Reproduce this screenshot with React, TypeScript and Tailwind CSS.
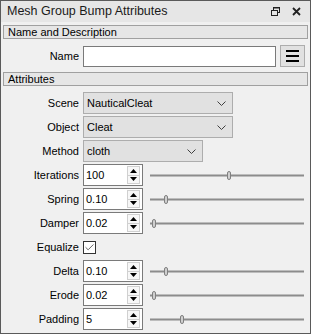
import { Check } from 'lucide-react';

const font = { fontFamily: '"Liberation Sans", Arial, sans-serif' };

function Label({ text }: { text: string }) {
  return <div className="w-[77px] shrink-0 text-right pr-[1px]">{text}</div>;
}

function Chevron() {
  return (
    <svg width="9" height="5" viewBox="0 0 9 5" className="shrink-0">
      <path d="M0.5 0.5 L4.5 4.5 L8.5 0.5" fill="none" stroke="#404040" strokeWidth="1" />
    </svg>
  );
}

function Combo({ value, width }: { value: string; width: string }) {
  return (
    <div className={`${width} h-[22px] bg-[#e1e1e1] border border-[#adadad] flex items-center justify-between pl-[3px] pr-[6px]`}>
      <span>{value}</span>
      <Chevron />
    </div>
  );
}

function Spin({ value }: { value: string }) {
  return (
    <div className="w-[60px] h-[22px] bg-white border border-[#7a7a7a] flex items-center justify-between pl-[2px] pr-[2px] shrink-0">
      <span>{value}</span>
      <div className="flex flex-col w-[13px] h-[18px]">
        <div className="flex-1 border border-[#d0d0d0] bg-[#f7f7f7] flex items-center justify-center">
          <svg width="7" height="4" viewBox="0 0 7 4"><path d="M0 4 L3.5 0 L7 4 Z" fill="#000" /></svg>
        </div>
        <div className="flex-1 border border-[#d0d0d0] border-t-0 bg-[#f7f7f7] flex items-center justify-center">
          <svg width="7" height="4" viewBox="0 0 7 4"><path d="M0 0 L3.5 4 L7 0 Z" fill="#000" /></svg>
        </div>
      </div>
    </div>
  );
}

function Slider({ pos }: { pos: number }) {
  return (
    <div className="relative flex-1 h-[22px] ml-[4px] flex items-center">
      <div className="w-full h-[3px] bg-[#8c8c8c] border-y border-[#bdbdbd]" />
      <div
        className="absolute top-[7px] w-[4px] h-[9px] rounded-full bg-[#cfcfcf] border border-[#808080]"
        style={{ left: pos }}
      />
    </div>
  );
}

function Row({ label, children }: { label: string; children: React.ReactNode }) {
  return (
    <div className="flex items-center h-[22px] gap-[3px]">
      <Label text={label} />
      {children}
    </div>
  );
}

function Header({ text }: { text: string }) {
  return (
    <div className="h-[14px] bg-[#e6e6e6] border border-[#a0a0a0] flex items-center pl-[4px] leading-none">
      {text}
    </div>
  );
}

export default function App() {
  const sliders = [
    { label: 'Iterations', value: '100', pos: 77 },
    { label: 'Spring', value: '0.10', pos: 14 },
    { label: 'Damper', value: '0.02', pos: 2 },
  ];
  const sliders2 = [
    { label: 'Delta', value: '0.10', pos: 14 },
    { label: 'Erode', value: '0.02', pos: 2 },
    { label: 'Padding', value: '5', pos: 30 },
  ];

  return (
    <div style={font} className="w-[311px] h-[334px] bg-[#f0f0f0] border border-[#5a5a5a] text-[11px] text-black flex flex-col">
      <div className="h-[21px] bg-[#e6e6e6] flex items-center justify-between pl-[6px] pr-[9px] shrink-0">
        <span className="text-[12.5px] text-[#1a1a1a]">Mesh Group Bump Attributes</span>
        <div className="flex items-center gap-[12px]">
          <svg width="9" height="9" viewBox="0 0 9 9">
            <rect x="2.5" y="0.5" width="6" height="5" fill="none" stroke="#222" />
            <rect x="0.5" y="3.5" width="6" height="5" fill="#e6e6e6" stroke="#222" />
            <line x1="2.5" y1="1" x2="8.5" y2="1" stroke="#222" />
          </svg>
          <svg width="9" height="9" viewBox="0 0 9 9">
            <path d="M1 1 L8 8 M8 1 L1 8" stroke="#222" strokeWidth="1.8" />
          </svg>
        </div>
      </div>

      <div className="flex flex-col px-[2px] pt-[3px]">
        <Header text="Name and Description" />
        <div className="flex items-center h-[22px] gap-[3px] mt-[6px]">
          <Label text="Name" />
          <div className="w-[193px] h-[21px] bg-white border border-[#7a7a7a]" />
          <div className="w-[25px] h-[22px] ml-[1px] bg-[#e1e1e1] border border-[#adadad] flex flex-col items-center justify-center gap-[3px]">
            <div className="w-[13px] h-[2px] bg-black" />
            <div className="w-[13px] h-[2px] bg-black" />
            <div className="w-[13px] h-[2px] bg-black" />
          </div>
        </div>

        <div className="mt-[5px]">
          <Header text="Attributes" />
        </div>

        <div className="flex flex-col gap-[2px] mt-[6px] pr-[4px]">
          <Row label="Scene">
            <Combo value="NauticalCleat" width="w-[150px]" />
          </Row>
          <Row label="Object">
            <Combo value="Cleat" width="w-[150px]" />
          </Row>
          <Row label="Method">
            <Combo value="cloth" width="w-[120px]" />
          </Row>
          {sliders.map((s) => (
            <Row key={s.label} label={s.label}>
              <Spin value={s.value} />
              <Slider pos={s.pos} />
            </Row>
          ))}
          <Row label="Equalize">
            <div className="w-[13px] h-[13px] bg-white border border-[#333] flex items-center justify-center">
              <Check size={11} strokeWidth={1.5} color="#222" />
            </div>
          </Row>
          {sliders2.map((s) => (
            <Row key={s.label} label={s.label}>
              <Spin value={s.value} />
              <Slider pos={s.pos} />
            </Row>
          ))}
        </div>
      </div>
    </div>
  );
}
